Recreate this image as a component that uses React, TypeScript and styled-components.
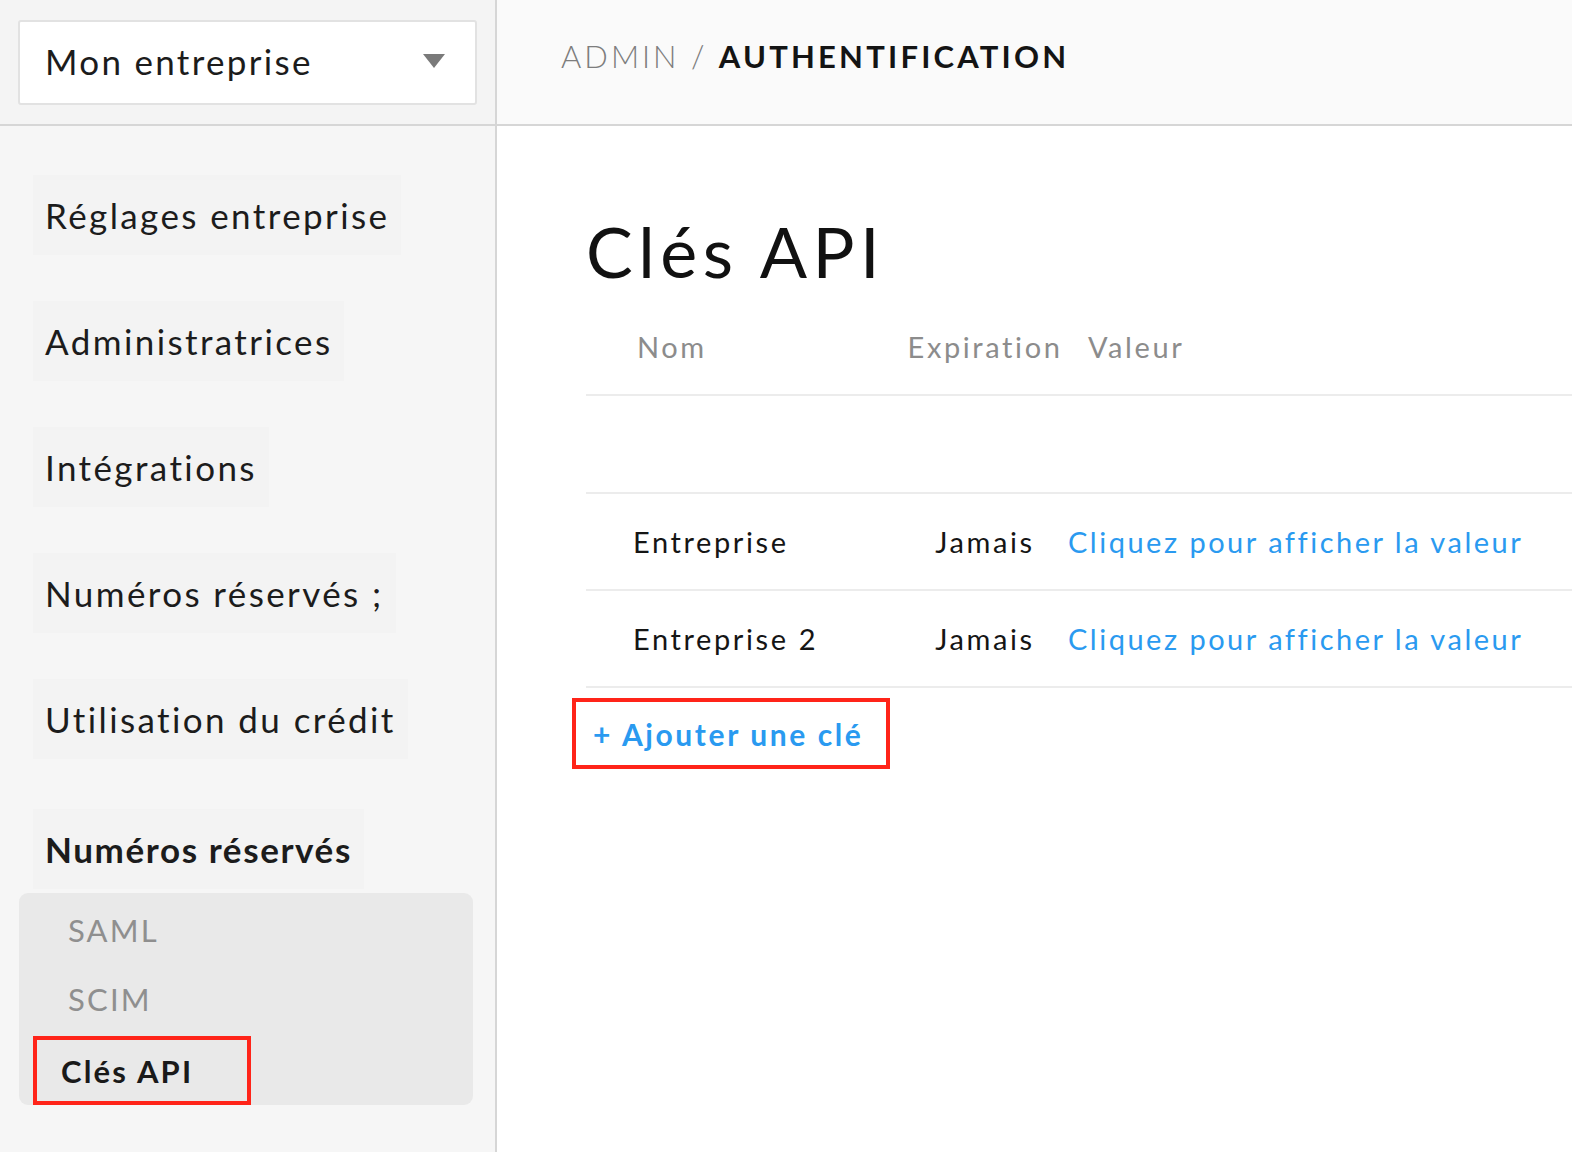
import React from 'react';
import styled, { createGlobalStyle } from 'styled-components';

const GlobalStyle = createGlobalStyle`
    html, body {
        margin: 0;
        padding: 0;
        background: #ffffff;
    }
    body {
        font-family: "Lato", "Liberation Sans", sans-serif;
        color: #1a1a1a;
    }
`;

const Page = styled.div`
    display: grid;
    grid-template-columns: 497px 1fr;
    height: 1152px;
    overflow: hidden;
`;

const Sidebar = styled.aside`
    background-color: #f6f6f6;
    border-right: 2px solid #d6d6d6;
    display: flex;
    flex-direction: column;
`;

const SidebarTop = styled.div`
    border-bottom: 2px solid #d6d6d6;
    padding: 20px 18px 0 18px;
    box-sizing: border-box;
    height: 126px;
    background-color: #f4f4f4;
`;

const Select = styled.div`
    height: 85px;
    box-sizing: border-box;
    background: #ffffff;
    border: 2px solid #e2e2e2;
    border-radius: 3px;
    display: flex;
    align-items: center;
    justify-content: space-between;
    padding: 0 30px 4px 25px;
    font-size: 35px;
    letter-spacing: 2.3px;
    color: #1c1c1c;
`;

const Caret = styled.svg`
    width: 22px;
    height: 14px;
    fill: #7a7a7a;
`;

const Nav = styled.nav`
    display: flex;
    flex-direction: column;
    align-items: flex-start;
    padding: 49px 0 0 33px;
    gap: 46px;
`;

const NavItem = styled.div<{ bold?: boolean }>`
    background-color: #f3f3f3;
    padding: 0 12px;
    height: 80px;
    display: flex;
    align-items: center;
    font-size: 35px;
    letter-spacing: ${props => props.bold ? '1.6px' : '2.4px'};
    font-weight: ${props => props.bold ? 700 : 400};
    margin-top: ${props => props.bold ? '4px' : '0'};
    color: #1c1c1c;
`;

const SubMenu = styled.div`
    margin: 4px 22px 0 19px;
    background-color: #e9e9e9;
    border-radius: 9px;
    height: 212px;
    box-sizing: border-box;
    padding: 2px 0 0 14px;
    display: flex;
    flex-direction: column;
`;

const SubItem = styled.div<{ active?: boolean }>`
    height: 71px;
    box-sizing: border-box;
    display: flex;
    align-items: center;
    font-size: 31px;
    letter-spacing: 2.2px;
    color: ${props => props.active ? '#1a1a1a' : '#8f8f8f'};
    font-weight: ${props => props.active ? 700 : 400};
    padding-left: ${props => props.active ? '24px' : '35px'};
    ${props => props.active && `
        border: 4px solid #ff2419;
        width: 218px;
        height: 70px;
        margin-top: 2px;
    `}
`;

const Main = styled.main`
    display: flex;
    flex-direction: column;
    background: #ffffff;
`;

const Header = styled.header`
    height: 126px;
    box-sizing: border-box;
    background-color: #fafafa;
    border-bottom: 2px solid #d6d6d6;
    display: flex;
    align-items: center;
    padding: 0 0 12px 64px;
    font-size: 31px;
    letter-spacing: 3px;
`;

const Crumb = styled.span<{ current?: boolean }>`
    color: ${props => props.current ? '#141414' : '#7d7d7d'};
    font-weight: ${props => props.current ? 700 : 300};
    letter-spacing: ${props => props.current ? '3.2px' : '3px'};
`;

const Content = styled.section`
    padding: 85px 0 0 89px;
`;

const Title = styled.h1`
    margin: 0;
    font-size: 70px;
    font-weight: 400;
    letter-spacing: 5.5px;
    line-height: 80px;
    color: #111111;
`;

const Table = styled.div`
    margin-top: 7px;
`;

const Row = styled.div<{ height: number }>`
    display: grid;
    grid-template-columns: 320px 158px 1fr;
    align-items: center;
    box-sizing: border-box;
    height: ${props => props.height}px;
    border-bottom: 2px solid #ececec;
`;

const HeadCell = styled.div<{ pad?: number; center?: boolean }>`
    font-size: 29px;
    letter-spacing: 2.6px;
    color: #8c8c8c;
    padding-left: ${props => props.pad ?? 0}px;
    text-align: ${props => props.center ? 'center' : 'left'};
    white-space: nowrap;
`;

const Cell = styled.div<{ pad?: number; center?: boolean; link?: boolean }>`
    font-size: 29px;
    letter-spacing: ${props => props.link ? '2.5px' : '2.6px'};
    color: ${props => props.link ? '#2a9af0' : '#151515'};
    padding-left: ${props => props.pad ?? 0}px;
    text-align: ${props => props.center ? 'center' : 'left'};
    white-space: nowrap;
    cursor: ${props => props.link ? 'pointer' : 'default'};
`;

const AddButton = styled.button`
    margin: 10px 0 0 -14px;
    height: 71px;
    width: 318px;
    border: 4px solid #ff2419;
    background: #ffffff;
    color: #2a9af0;
    font-family: "Lato", "Liberation Sans", sans-serif;
    font-size: 30px;
    font-weight: 700;
    letter-spacing: 2.6px;
    text-align: left;
    padding: 0 0 0 17px;
    cursor: pointer;
`;

const navItems = [
    'Réglages entreprise',
    'Administratrices',
    'Intégrations',
    'Numéros réservés ;',
    'Utilisation du crédit',
];

const keys = [
    { name: 'Entreprise', expiration: 'Jamais' },
    { name: 'Entreprise 2', expiration: 'Jamais' },
];

const App: React.FC = () => {
    return (
        <React.Fragment>
            <GlobalStyle />
            <Page>
                <Sidebar>
                    <SidebarTop>
                        <Select>
                            <span>Mon entreprise</span>
                            <Caret viewBox="0 0 22 14">
                                <path d="M0 0 L22 0 L11 14 Z" />
                            </Caret>
                        </Select>
                    </SidebarTop>
                    <Nav>
                        {navItems.map(item => <NavItem key={item}>{item}</NavItem>)}
                        <NavItem bold>Numéros réservés</NavItem>
                    </Nav>
                    <SubMenu>
                        <SubItem>SAML</SubItem>
                        <SubItem>SCIM</SubItem>
                        <SubItem active>Clés API</SubItem>
                    </SubMenu>
                </Sidebar>
                <Main>
                    <Header>
                        <Crumb>ADMIN /&nbsp;</Crumb>
                        <Crumb current>AUTHENTIFICATION</Crumb>
                    </Header>
                    <Content>
                        <Title>Clés API</Title>
                        <Table>
                            <Row height={98}>
                                <HeadCell pad={51}>Nom</HeadCell>
                                <HeadCell center>Expiration</HeadCell>
                                <HeadCell pad={24}>Valeur</HeadCell>
                            </Row>
                            <Row height={98} />
                            {keys.map(k => (
                                <Row height={97} key={k.name}>
                                    <Cell pad={47}>{k.name}</Cell>
                                    <Cell center>{k.expiration}</Cell>
                                    <Cell pad={4} link>Cliquez pour afficher la valeur</Cell>
                                </Row>
                            ))}
                        </Table>
                        <AddButton>+ Ajouter une clé</AddButton>
                    </Content>
                </Main>
            </Page>
        </React.Fragment>
    );
};

export default App;
